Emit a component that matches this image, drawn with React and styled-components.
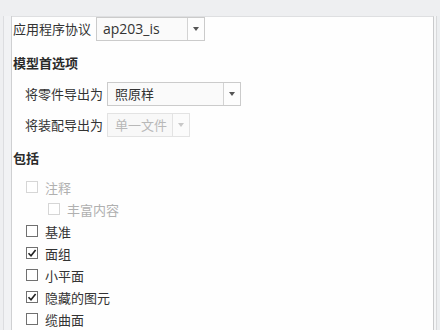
import styled, { createGlobalStyle } from "styled-components"

const GlobalStyle = createGlobalStyle`
    html, body {
        margin: 0;
        padding: 0;
        background: #eeeff1;
    }
    body {
        font-family: "Noto Sans CJK SC", "Noto Sans", sans-serif;
        font-size: 13px;
        color: #333;
    }
`
const Window = styled.div`
    width: 440px;
    height: 330px;
    display: flex;
    padding-top: 16px;
    box-sizing: border-box;
    overflow: hidden;
    background: #eeeff1;
`
const LeftStrip = styled.div`
    width: 12px;
    flex-shrink: 0;
    border-right: 1px solid #cfd0d2;
    box-sizing: border-box;
    background: linear-gradient(to right, #eeeff1 3px, #dcdde0 3px, #dcdde0 4px, #f1f2f4 4px);
`
const Panel = styled.div`
    width: 420px;
    flex-shrink: 0;
    background: #fefefe;
    border-top: 1px solid #dedfe1;
    border-right: 1px solid #c9cacc;
    padding: 0 0 0 1px;
    display: flex;
    flex-direction: column;
`
const RightStrip = styled.div`
    flex: 1;
    background: linear-gradient(to right, #f4f5f6 2px, #d8d9db 2px, #d8d9db 3px, #eceef0 3px);
`
const FormRow = styled.div`
    display: flex;
    align-items: center;
    height: 24px;
    padding-left: ${p => p.$indent || 0}px;
    margin-top: ${p => p.$top || 0}px;
    white-space: nowrap;
`
const Label = styled.span`
    width: ${p => p.$width}px;
    flex-shrink: 0;
    line-height: 24px;
`
const Select = styled.div`
    display: flex;
    width: ${p => p.$width}px;
    height: 24px;
    box-sizing: border-box;
    border: 1px solid ${p => (p.$disabled ? "#e3e3e3" : "#cbcbcb")};
    background: ${p => (p.$disabled ? "#fbfbfb" : "#fdfdfd")};
    color: ${p => (p.$disabled ? "#b8b8b8" : "#333")};
`
const SelectValue = styled.div`
    flex: 1;
    padding-left: ${p => p.$latin ? 6 : 7}px;
    line-height: 22px;
    font-family: ${p => p.$latin ? '"Open Sans", "Noto Sans", sans-serif' : '"Noto Sans CJK SC", sans-serif'};
    font-size: ${p => p.$latin ? 14 : 13}px;
    background: ${p => (p.$disabled ? "#f8f8f8" : "#fafafa")};
`
const SelectArrow = styled.div`
    width: 16px;
    border-left: 1px solid ${p => (p.$disabled ? "#e3e3e3" : "#d3d3d3")};
    display: flex;
    align-items: center;
    justify-content: center;
    &::after {
        content: "";
        border-left: 3px solid transparent;
        border-right: 3px solid transparent;
        border-top: 4px solid ${p => (p.$disabled ? "#c8c8c8" : "#555")};
    }
`
const SectionTitle = styled.div`
    font-weight: 700;
    height: 22px;
    line-height: 22px;
    margin-top: ${p => p.$top}px;
    color: #2b2b2b;
`
const CheckList = styled.div`
    display: flex;
    flex-direction: column;
    margin-top: 7px;
`
const CheckRow = styled.div`
    display: flex;
    align-items: center;
    gap: 7px;
    height: 22px;
    padding-left: ${p => p.$indent}px;
    color: ${p => (p.$disabled ? "#b0b0b0" : "#333")};
    white-space: nowrap;
`
const Box = styled.span`
    width: 12px;
    height: 12px;
    box-sizing: border-box;
    border: 1px solid ${p => (p.$disabled ? "#d6d6d6" : "#707070")};
    background: #fff;
    display: flex;
    align-items: center;
    justify-content: center;
    flex-shrink: 0;
`

const Check = () => (
    <svg width="10" height="10" viewBox="0 0 10 10">
        <path d="M1.5 5.2 L4 7.8 L8.6 2" fill="none" stroke="#222" strokeWidth="1.6" />
    </svg>
)

const items = [
    { text: "注释", indent: 26, disabled: true },
    { text: "丰富内容", indent: 48, disabled: true },
    { text: "基准", indent: 26 },
    { text: "面组", indent: 26, checked: true },
    { text: "小平面", indent: 26 },
    { text: "隐藏的图元", indent: 26, checked: true },
    { text: "缆曲面", indent: 26 },
]

const App = () => {
    return (
        <>
            <GlobalStyle />
            <Window>
                <LeftStrip />
                <Panel>
                    <FormRow>
                        <Label $width={83}>应用程序协议</Label>
                        <Select $width={109}>
                            <SelectValue $latin>ap203_is</SelectValue>
                            <SelectArrow />
                        </Select>
                    </FormRow>
                    <SectionTitle $top={11}>模型首选项</SectionTitle>
                    <FormRow $indent={12} $top={8}>
                        <Label $width={82}>将零件导出为</Label>
                        <Select $width={134}>
                            <SelectValue>照原样</SelectValue>
                            <SelectArrow />
                        </Select>
                    </FormRow>
                    <FormRow $indent={12} $top={7}>
                        <Label $width={82}>将装配导出为</Label>
                        <Select $width={83} $disabled>
                            <SelectValue $disabled>单一文件</SelectValue>
                            <SelectArrow $disabled />
                        </Select>
                    </FormRow>
                    <SectionTitle $top={10}>包括</SectionTitle>
                    <CheckList>
                        {items.map(item => (
                            <CheckRow key={item.text} $indent={item.indent - 13} $disabled={item.disabled}>
                                <Box $disabled={item.disabled}>{item.checked && <Check />}</Box>
                                <span>{item.text}</span>
                            </CheckRow>
                        ))}
                    </CheckList>
                </Panel>
                <RightStrip />
            </Window>
        </>
    )
}

export default App
